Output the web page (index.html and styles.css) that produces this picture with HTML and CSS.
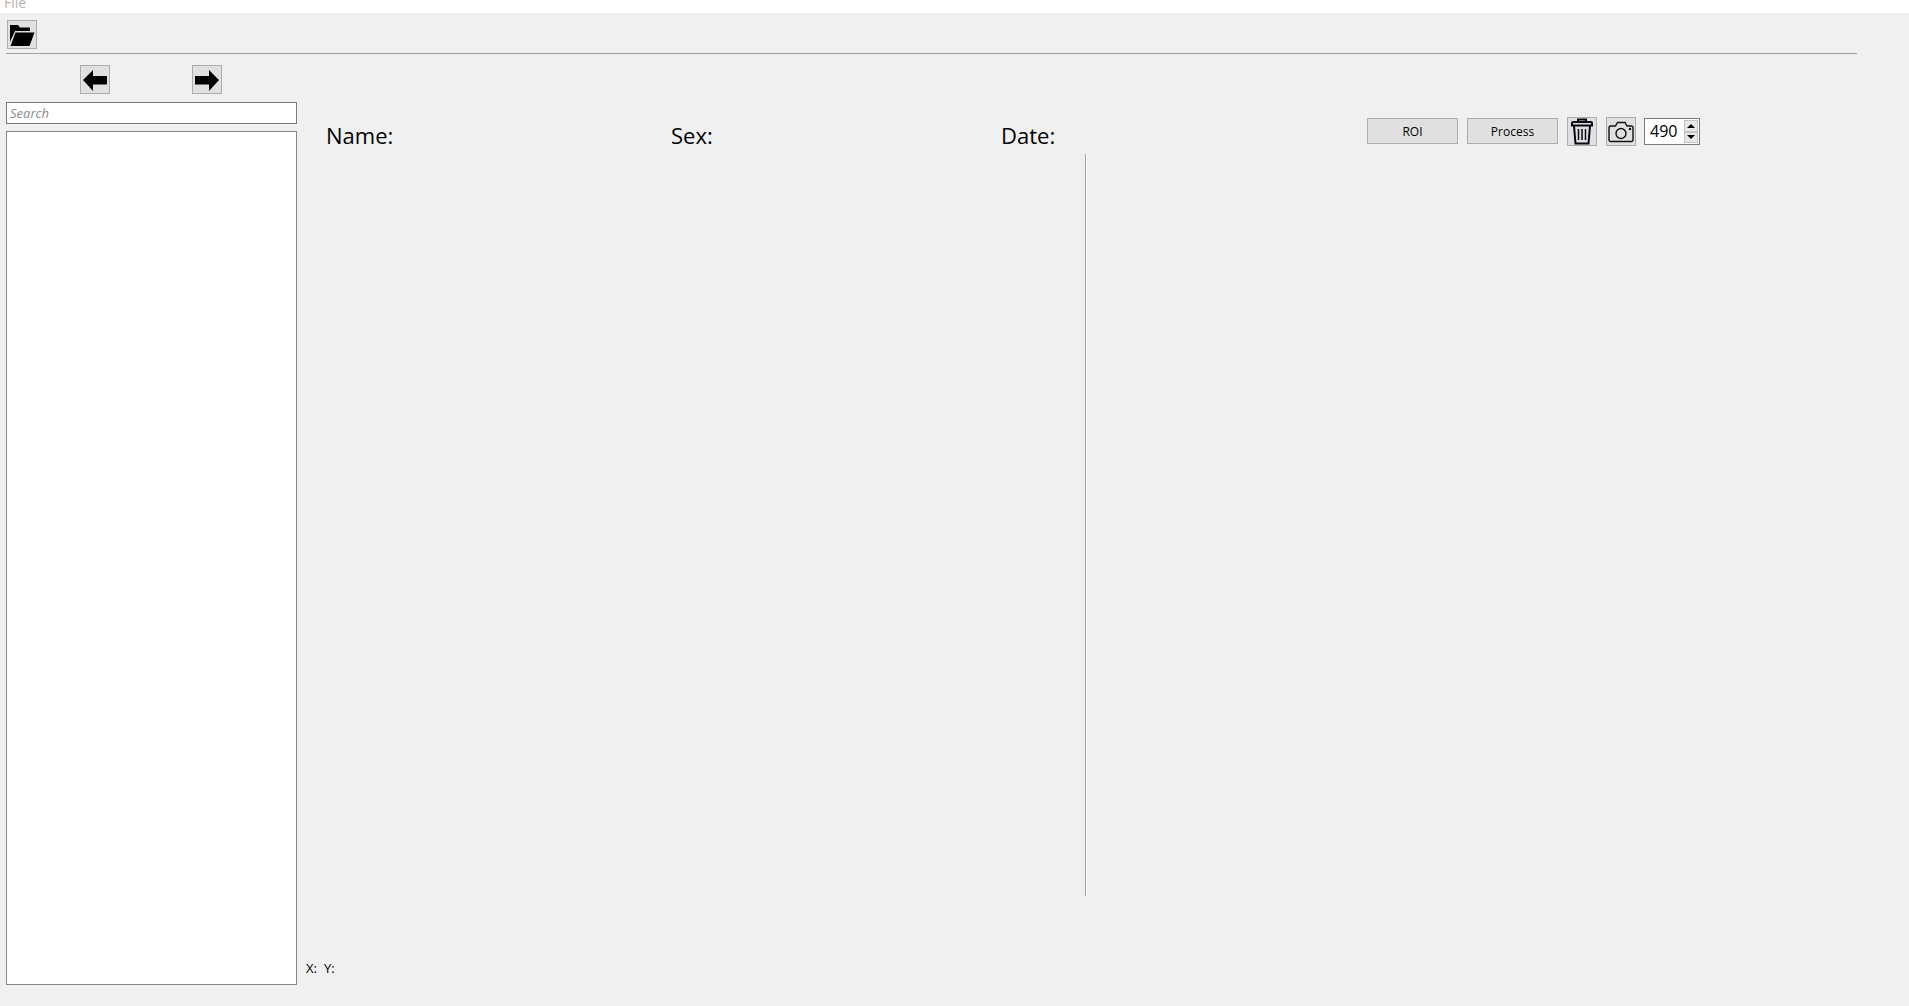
FILE: index.html
```html
<!DOCTYPE html>
<html lang="en">
  <head>
    <meta charset="UTF-8" />
    <title>Viewer</title>
    <link rel="stylesheet" href="styles.css">
  </head>
  <body>
    <div class="menubar"><span class="menu-item">File</span></div>

    <div class="toolbar">
      <button class="icon-btn">
        <svg width="26" height="24" viewBox="0 0 26 24">
          <path d="M1 2 H9 L11 4.5 H21 V8 H6 L1 19 Z" fill="#000" />
          <path d="M6.5 9.5 H25.5 L20.5 23 H1.5 Z" fill="#000" />
        </svg>
      </button>
    </div>
    <div class="rule"></div>

    <div class="main">
      <aside class="sidebar">
        <div class="nav-row">
          <button class="icon-btn">
            <svg width="26" height="24" viewBox="0 0 26 24"><path d="M1 12 L11 2 V8 H25 V16.5 H11 V23 Z" fill="#000" /></svg>
          </button>
          <button class="icon-btn">
            <svg width="26" height="24" viewBox="0 0 26 24"><path d="M25 12 L15 2 V8 H1 V16.5 H15 V23 Z" fill="#000" /></svg>
          </button>
        </div>
        <input class="search" type="text" placeholder="Search" />
        <div class="list"></div>
      </aside>

      <section class="content">
        <div class="top-row">
          <div class="info">
            <span class="info-label name">Name:</span>
            <span class="info-label sex">Sex:</span>
            <span class="info-label date">Date:</span>
          </div>
          <div class="controls">
            <button class="text-btn">ROI</button>
            <button class="text-btn">Process</button>
            <button class="icon-btn small">
              <svg width="24" height="27" viewBox="0 0 24 27" fill="none" stroke="#0a0512" stroke-width="2">
                <path d="M2 5 Q2 4 3 4 H21 Q22 4 22 5 V7.5 H2 Z" />
                <path d="M8 4 V1.5 H16 V4" />
                <path d="M4 8 L5.5 25.5 H18.5 L20 8" />
                <path d="M8.5 11 V22 M12 11 V22 M15.5 11 V22" stroke-width="1.5" />
              </svg>
            </button>
            <button class="icon-btn small">
              <svg width="26" height="22" viewBox="0 0 26 22" fill="none" stroke="#111" stroke-width="1.4">
                <path d="M2.5 5 H7.5 L9.5 1.5 H17 L19 5 H23.5 A1.5 1.5 0 0 1 25 6.5 V19 A1.5 1.5 0 0 1 23.5 20.5 H2.5 A1.5 1.5 0 0 1 1 19 V6.5 A1.5 1.5 0 0 1 2.5 5 Z" />
                <circle cx="13" cy="12.5" r="5" />
                <circle cx="22" cy="8" r="0.6" fill="#111" />
              </svg>
            </button>
            <div class="spin">
              <span class="spin-value">490</span>
              <div class="spin-btns">
                <span class="spin-btn"><i class="tri up"></i></span>
                <span class="spin-btn"><i class="tri down"></i></span>
              </div>
            </div>
          </div>
        </div>
        <div class="plot-area">
          <div class="divider"></div>
        </div>
        <div class="coords"><span>X:</span><span>Y:</span></div>
      </section>
    </div>
  </body>
</html>
```

FILE: styles.css
```css
html, body {
  margin: 0;
  height: 100%;
}

body {
  background-color: #f0f0f0;
  font-family: "Open Sans", "Noto Sans", sans-serif;
  overflow: hidden;
}

.menubar {
  height: 13px;
  background-color: #fff;
  overflow: hidden;
}

.menu-item {
  display: block;
  margin: -6px 0 0 4px;
  font-size: 14px;
  line-height: 17px;
  color: #b9b4ac;
}

.toolbar {
  display: flex;
  height: 29px;
  padding: 7px 0 0 7px;
}

.rule {
  width: 1851px;
  height: 1px;
  margin: 4px 0 0 6px;
  background-color: #a0a0a0;
}

.main {
  display: flex;
}

.sidebar {
  display: flex;
  flex-direction: column;
  width: 291px;
  margin-left: 6px;
}

.nav-row {
  display: flex;
  gap: 82px;
  height: 30px;
  margin: 11px 0 7px 74px;
}

.icon-btn {
  display: flex;
  align-items: center;
  justify-content: center;
  box-sizing: border-box;
  width: 30px;
  height: 29px;
  padding: 0;
  background-color: #e0e0e0;
  border: 1px solid #adadad;
}

.search {
  box-sizing: border-box;
  width: 291px;
  height: 22px;
  padding: 0 3px;
  border: 1px solid #7a7a7a;
  background-color: #fff;
  font-family: "Open Sans", sans-serif;
  font-size: 13px;
  font-style: italic;
  outline: none;
}

.search::placeholder {
  color: #8c8c8c;
}

.list {
  box-sizing: border-box;
  height: 854px;
  margin-top: 7px;
  border: 1px solid #828790;
  background-color: #fff;
}

.content {
  position: relative;
  flex: 1;
  height: 932px;
}

.top-row {
  display: flex;
  height: 30px;
  padding-top: 63px;
}

.info {
  display: flex;
  width: 1070px;
  padding-left: 29px;
  box-sizing: border-box;
}

.info-label {
  margin-top: -4px;
  font-size: 22px;
  line-height: 44px;
  color: #000;
}

.name { width: 345px; }
.sex { width: 330px; }

.controls {
  display: flex;
  align-items: flex-start;
  gap: 9px;
  height: 29px;
}

.text-btn {
  box-sizing: border-box;
  width: 91px;
  height: 26px;
  margin-top: 1px;
  padding: 0;
  background-color: #e0e0e0;
  border: 1px solid #adadad;
  font-family: "Open Sans", sans-serif;
  font-size: 12px;
  color: #000;
}

.spin {
  display: flex;
  box-sizing: border-box;
  width: 56px;
  height: 27px;
  margin: 1px 0 0 -1px;
  border: 1px solid #7a7a7a;
  background-color: #fff;
}

.spin-value {
  flex: 1;
  padding-left: 5px;
  font-size: 16px;
  line-height: 25px;
}

.spin-btns {
  display: flex;
  flex-direction: column;
  width: 14px;
  padding: 1px 1px 1px 0;
}

.spin-btn {
  flex: 1;
  display: flex;
  align-items: center;
  justify-content: center;
  background-color: #e8e8e8;
  border: 1px solid #c4c4c4;
}

.tri {
  width: 0;
  height: 0;
  border-left: 4px solid transparent;
  border-right: 4px solid transparent;
}

.tri.up { border-bottom: 4px solid #000; }
.tri.down { border-top: 4px solid #000; }

.plot-area {
  height: 742px;
  margin-top: 7px;
}

.divider {
  width: 1px;
  height: 742px;
  margin-left: 788px;
  background-color: #a0a0a0;
  box-shadow: 1px 0 0 #fff;
}

.coords {
  display: flex;
  gap: 7px;
  margin: 64px 0 0 9px;
  font-size: 13px;
  line-height: 16px;
  color: #000;
}
```
